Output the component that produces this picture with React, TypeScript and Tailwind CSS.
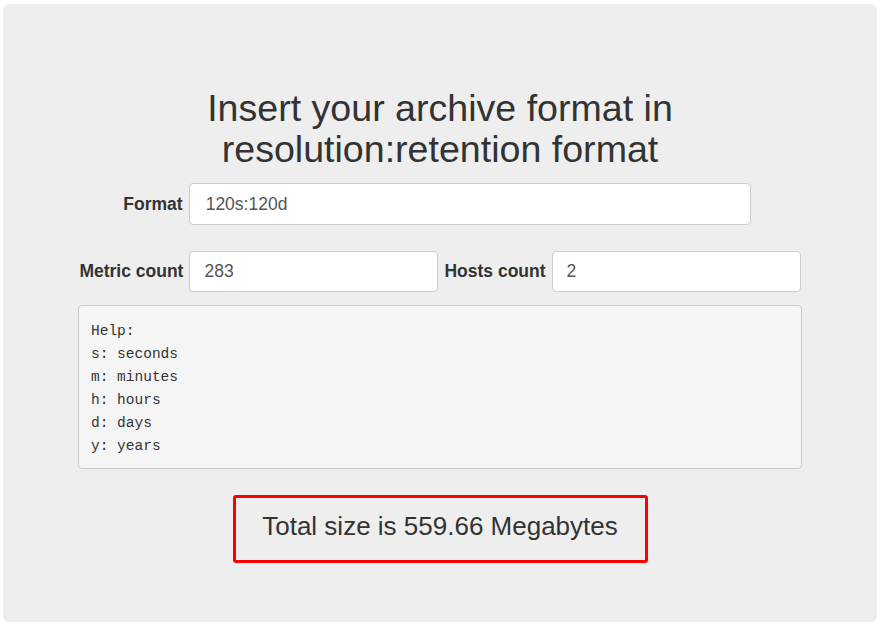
export default function App() {
  return (
    <div className="min-h-screen bg-white px-[3px] pt-[4px] pb-[5px] font-['Liberation_Sans',Arial,sans-serif] text-[#333]">
      <div className="h-[618px] w-[874px] rounded-[6px] bg-[#eeeeee] pt-[84px]">
        <h1 className="text-center text-[37.6px] leading-[41px] font-normal">
          Insert your archive format in
          <br />
          resolution:retention format
        </h1>

        <div className="mt-[13px] flex items-center justify-center gap-[6px] pr-[6px]">
          <label className="text-[17.5px] font-bold">Format</label>
          <input
            readOnly
            value="120s:120d"
            className="h-[42px] w-[562px] rounded-[4px] border border-[#cccccc] bg-white px-[16px] text-[17.5px] text-[#555] outline-none"
          />
        </div>

        <div className="mt-[26px] flex items-center justify-center gap-[6px]">
          <label className="text-[17.5px] font-bold">Metric count</label>
          <input
            readOnly
            value="283"
            className="h-[41px] w-[249px] rounded-[4px] border border-[#cccccc] bg-white px-[14px] text-[17.5px] text-[#555] outline-none"
          />
          <label className="text-[17.5px] font-bold">Hosts count</label>
          <input
            readOnly
            value="2"
            className="h-[41px] w-[249px] rounded-[4px] border border-[#cccccc] bg-white px-[14px] text-[17.5px] text-[#555] outline-none"
          />
        </div>

        <pre className="mx-[75px] mt-[13px] rounded-[4px] border border-[#cccccc] bg-[#f5f5f5] px-[12px] pt-[14px] pb-[10px] font-['Liberation_Mono','DejaVu_Sans_Mono',monospace] text-[14.5px] leading-[23px] text-[#333]">
{`Help:
s: seconds
m: minutes
h: hours
d: days
y: years`}
        </pre>

        <div className="mt-[26px] flex justify-center">
          <div className="flex h-[68px] w-[415px] items-center justify-center rounded-[3px] border-[3px] border-[#ff0000] pb-[5px] text-[26px]">
            Total size is 559.66 Megabytes
          </div>
        </div>
      </div>
    </div>
  );
}
